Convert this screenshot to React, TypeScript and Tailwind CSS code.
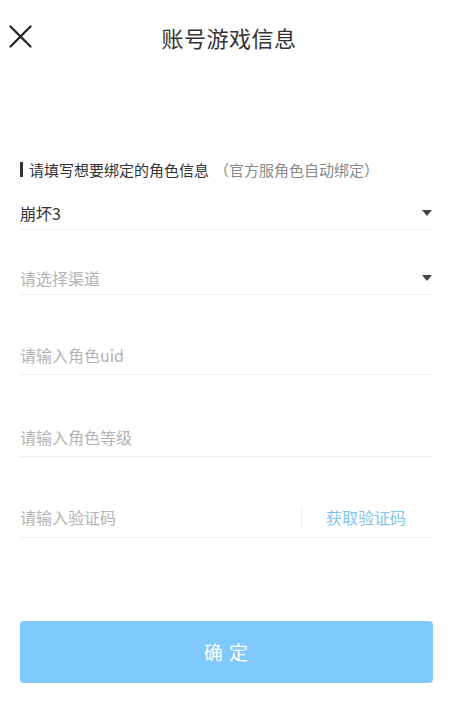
import React from 'react';

const font = { fontFamily: '"Noto Sans CJK SC", "Noto Sans", sans-serif' };

const Caret: React.FC = () => (
  <svg width="10" height="6" viewBox="0 0 10 6" className="mr-[1px]">
    <path d="M0 0 H10 L5 6 Z" fill="#444" />
  </svg>
);

const App: React.FC = () => {
  return (
    <div className="w-[458px] h-[702px] bg-white overflow-hidden" style={font}>
      <header className="relative h-[74px] flex items-center justify-center">
        <button className="absolute left-[9px] top-[25px] w-[23px] h-[23px]">
          <svg width="23" height="23" viewBox="0 0 23 23">
            <path d="M1.5 1.5 L21.5 21.5 M21.5 1.5 L1.5 21.5" stroke="#222" strokeWidth="2.2" strokeLinecap="round" />
          </svg>
        </button>
        <h1 className="text-[22px] text-[#333] leading-none tracking-[0.5px]">账号游戏信息</h1>
      </header>

      <main className="pl-5 pr-[25px]">
        <div className="mt-[85px] h-[20px] flex items-center">
          <span className="w-[3px] h-[15px] bg-[#333] mr-[6px]" />
          <span className="text-[15px] text-[#333] leading-none">请填写想要绑定的角色信息</span>
          <span className="text-[15px] text-[#888] leading-none ml-[5px]">（官方服角色自动绑定）</span>
        </div>

        <div className="mt-[18px] h-[33px] flex items-center justify-between border-b border-[#eeeeee]">
          <span className="text-[16px] text-[#333]">崩坏3</span>
          <Caret />
        </div>

        <div className="mt-[32px] h-[33px] flex items-center justify-between border-b border-[#eeeeee]">
          <span className="text-[16px] text-[#b3b3b3]">请选择渠道</span>
          <Caret />
        </div>

        <div className="mt-[41px] h-[39px] flex items-center border-b border-[#eeeeee]">
          <span className="text-[16px] text-[#b3b3b3]">请输入角色uid</span>
        </div>

        <div className="mt-[43px] h-[39px] flex items-center border-b border-[#eeeeee]">
          <span className="text-[16px] text-[#b3b3b3]">请输入角色等级</span>
        </div>

        <div className="mt-[40px] h-[41px] flex items-center border-b border-[#eeeeee]">
          <span className="flex-1 text-[16px] text-[#b3b3b3]">请输入验证码</span>
          <span className="w-px h-[19px] bg-[#eeeeee]" />
          <span className="w-[131px] pl-[24px] text-[16px] text-[#7fc4f2]">获取验证码</span>
        </div>

        <button className="mt-[83px] w-full h-[62px] rounded-[4px] bg-[#80c9fd] text-white text-[19px] tracking-[1px]">
          确 定
        </button>
      </main>
    </div>
  );
};

export default App;
